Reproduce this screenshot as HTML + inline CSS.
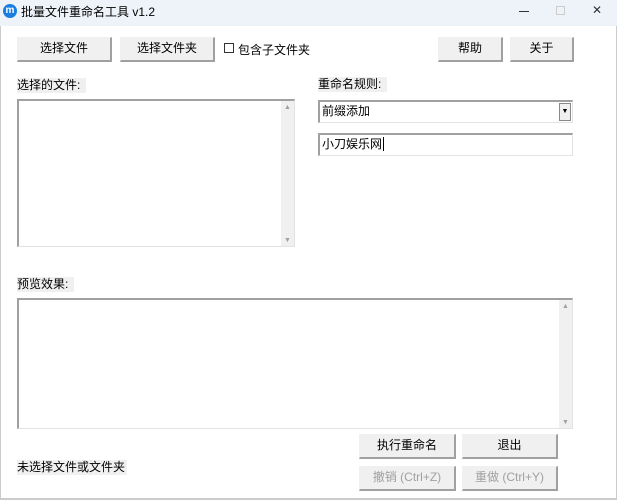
<!DOCTYPE html>
<html><head><meta charset="utf-8"><style>
*{margin:0;padding:0;box-sizing:border-box}
body{width:617px;height:500px;background:#fff;font-family:"Liberation Sans","Noto Sans CJK SC",sans-serif;font-size:12px;color:#000;position:relative;overflow:hidden}
.a{position:absolute}
.title{left:0;top:0;width:617px;height:26px;background:#eef3f9}
.btn{position:absolute;background:#f0f0f0;border:1px solid #f0f0f0;border-right:2px solid #a0a0a0;border-bottom:2px solid #a0a0a0;text-align:center;line-height:21px}
.dis{color:#a0a0a0}
.lbl{position:absolute;background:#f0f0f0;padding:0 2px 0 0;line-height:15px}
.box{position:absolute;background:#fff;border-top:2px solid #a0a0a0;border-left:2px solid #a0a0a0;border-bottom:1px solid #e3e3e3;border-right:1px solid #e3e3e3}
.sb{position:absolute;right:0;top:0;bottom:0;width:13px;background:#f0f0f0;color:#a0a0a0;font-size:7px;text-align:center}
</style></head><body>
<div class="a title"></div>
<div class="a" style="left:3px;top:4px;width:14px;height:14px;border-radius:50%;background:#1a7de0;color:#fff;font-size:10px;line-height:14px;text-align:center;font-weight:bold">m</div>
<div class="a" style="left:21px;top:3px;font-size:12px">批量文件重命名工具 v1.2</div>
<div class="a" style="left:519px;top:11px;width:10px;height:1px;background:#333"></div>
<div class="a" style="left:556px;top:6px;width:9px;height:9px;border:1px solid #ccc"></div>
<div class="a" style="left:592px;top:3px;font-size:12px;color:#333">✕</div>
<div class="a" style="left:0;top:26px;width:1px;height:474px;background:#ccc"></div>
<div class="a" style="left:616px;top:26px;width:1px;height:474px;background:#ccc"></div>

<div class="btn" style="left:17px;top:37px;width:95px;height:25px">选择文件</div>
<div class="btn" style="left:120px;top:37px;width:95px;height:25px">选择文件夹</div>
<div class="a" style="left:224px;top:43px;width:10px;height:10px;border:1px solid #333;background:#fff"></div>
<div class="a" style="left:238px;top:41px">包含子文件夹</div>
<div class="btn" style="left:438px;top:37px;width:65px;height:25px">帮助</div>
<div class="btn" style="left:510px;top:37px;width:64px;height:25px">关于</div>

<div class="lbl" style="left:17px;top:78px">选择的文件:&nbsp;</div>
<div class="box" style="left:17px;top:99px;width:278px;height:148px"><div class="sb"><div style="margin-top:3px">▲</div><div style="position:absolute;bottom:2px;width:13px">▼</div></div></div>

<div class="lbl" style="left:318px;top:77px">重命名规则:&nbsp;</div>
<div class="box" style="left:318px;top:100px;width:255px;height:23px;line-height:19px;padding-left:2px">前缀添加<div class="a" style="right:1px;top:1px;width:12px;height:18px;border:1px solid #888;background:#f0f0f0;font-size:7px;text-align:center;line-height:16px">▼</div></div>
<div class="box" style="left:318px;top:133px;width:255px;height:23px;line-height:19px;padding-left:2px">小刀娱乐网<span style="border-left:1px solid #000;margin-left:1px"></span></div>

<div class="lbl" style="left:17px;top:277px">预览效果:&nbsp;</div>
<div class="box" style="left:17px;top:298px;width:556px;height:131px"><div class="sb"><div style="margin-top:3px">▲</div><div style="position:absolute;bottom:2px;width:13px">▼</div></div></div>

<div class="btn" style="left:359px;top:434px;width:97px;height:25px">执行重命名</div>
<div class="btn" style="left:462px;top:434px;width:96px;height:25px">退出</div>
<div class="btn dis" style="left:359px;top:466px;width:97px;height:25px">撤销 (Ctrl+Z)</div>
<div class="btn dis" style="left:462px;top:466px;width:96px;height:25px">重做 (Ctrl+Y)</div>
<div class="lbl" style="left:17px;top:460px">未选择文件或文件夹</div>
<div class="a" style="left:0;top:498px;width:617px;height:2px;background:#ccc"></div>
</body></html>
